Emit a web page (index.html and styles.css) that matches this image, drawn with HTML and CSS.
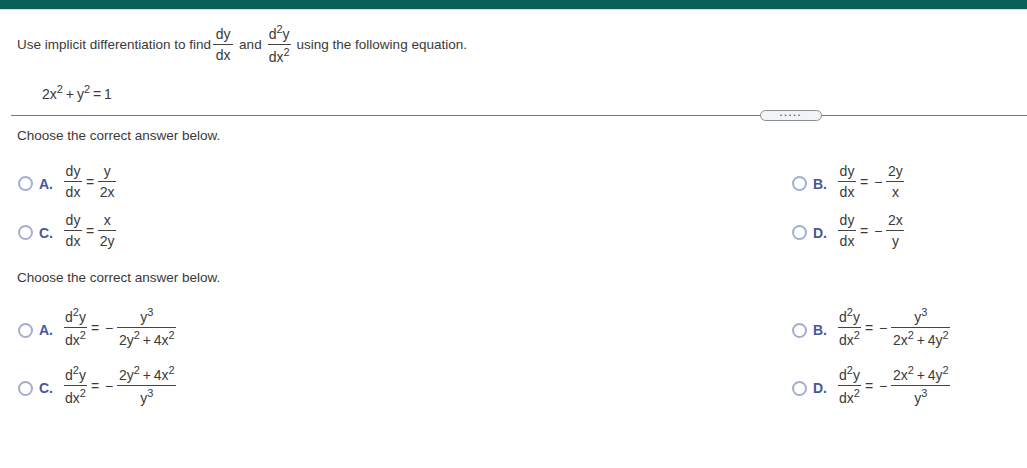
FILE: index.html
```html
<!DOCTYPE html>
<html lang="en">
<head>
<meta charset="utf-8">
<title>Implicit differentiation</title>
<link rel="stylesheet" href="styles.css">
</head>
<body>
<div class="topbar"></div>
<div class="question">
  <span class="lead">Use implicit differentiation to find</span>
  <span class="frac"><span class="num"><span>dy</span></span><span class="den"><span>dx</span></span></span>
  <span>and</span>
  <span class="frac"><span class="num"><span>d<sup>2</sup>y</span></span><span class="den"><span>dx<sup>2</sup></span></span></span>
  <span>using the following equation.</span>
</div>
<div class="equation">2x<sup>2</sup> + y<sup>2</sup> = 1</div>
<div class="divider"><span class="handle">.....</span></div>

<p class="prompt">Choose the correct answer below.</p>
<div class="options first">
  <div class="option">
    <span class="radio"></span><span class="letter">A.</span>
    <span class="frac"><span class="num"><span>dy</span></span><span class="den"><span>dx</span></span></span><span class="eq">=</span>
    <span class="frac"><span class="num"><span>y</span></span><span class="den"><span>2x</span></span></span>
  </div>
  <div class="option">
    <span class="radio"></span><span class="letter">B.</span>
    <span class="frac"><span class="num"><span>dy</span></span><span class="den"><span>dx</span></span></span><span class="eq">=</span><span class="minus">&minus;</span>
    <span class="frac"><span class="num"><span>2y</span></span><span class="den"><span>x</span></span></span>
  </div>
  <div class="option">
    <span class="radio"></span><span class="letter">C.</span>
    <span class="frac"><span class="num"><span>dy</span></span><span class="den"><span>dx</span></span></span><span class="eq">=</span>
    <span class="frac"><span class="num"><span>x</span></span><span class="den"><span>2y</span></span></span>
  </div>
  <div class="option">
    <span class="radio"></span><span class="letter">D.</span>
    <span class="frac"><span class="num"><span>dy</span></span><span class="den"><span>dx</span></span></span><span class="eq">=</span><span class="minus">&minus;</span>
    <span class="frac"><span class="num"><span>2x</span></span><span class="den"><span>y</span></span></span>
  </div>
</div>

<p class="prompt second">Choose the correct answer below.</p>
<div class="options last">
  <div class="option">
    <span class="radio"></span><span class="letter">A.</span>
    <span class="frac"><span class="num"><span>d<sup>2</sup>y</span></span><span class="den"><span>dx<sup>2</sup></span></span></span><span class="eq">=</span><span class="minus">&minus;</span>
    <span class="frac wide"><span class="num"><span>y<sup>3</sup></span></span><span class="den"><span>2y<sup>2</sup> + 4x<sup>2</sup></span></span></span>
  </div>
  <div class="option">
    <span class="radio"></span><span class="letter">B.</span>
    <span class="frac"><span class="num"><span>d<sup>2</sup>y</span></span><span class="den"><span>dx<sup>2</sup></span></span></span><span class="eq">=</span><span class="minus">&minus;</span>
    <span class="frac wide"><span class="num"><span>y<sup>3</sup></span></span><span class="den"><span>2x<sup>2</sup> + 4y<sup>2</sup></span></span></span>
  </div>
  <div class="option">
    <span class="radio"></span><span class="letter">C.</span>
    <span class="frac"><span class="num"><span>d<sup>2</sup>y</span></span><span class="den"><span>dx<sup>2</sup></span></span></span><span class="eq">=</span><span class="minus">&minus;</span>
    <span class="frac wide"><span class="num"><span>2y<sup>2</sup> + 4x<sup>2</sup></span></span><span class="den"><span>y<sup>3</sup></span></span></span>
  </div>
  <div class="option">
    <span class="radio"></span><span class="letter">D.</span>
    <span class="frac"><span class="num"><span>d<sup>2</sup>y</span></span><span class="den"><span>dx<sup>2</sup></span></span></span><span class="eq">=</span><span class="minus">&minus;</span>
    <span class="frac wide"><span class="num"><span>2x<sup>2</sup> + 4y<sup>2</sup></span></span><span class="den"><span>y<sup>3</sup></span></span></span>
  </div>
</div>
</body>
</html>
```
FILE: styles.css
```css
* { box-sizing: border-box; }
html, body { margin: 0; padding: 0; }
body {
  height: 468px;
  overflow: hidden;
  background: #fff;
  color: #3a3a3a;
  font: 13.5px/16px "Liberation Sans", Arial, sans-serif;
}
sup { font-size: 11px; line-height: 1; vertical-align: 6px; }
.topbar {
  height: 10px;
  background: #0a5f58;
  border-bottom: 1px solid #bfe6e4;
}
.question {
  display: flex;
  align-items: center;
  gap: 6px;
  margin: 11px 0 0 17px;
  height: 48px;
}
.lead { margin-right: -4px; }
.frac {
  display: inline-grid;
  grid-auto-rows: 1fr;
  min-width: 18px;
  font-size: 14px;
}
.question .frac { min-width: 20px; }
.num, .den {
  display: flex;
  justify-content: center;
  padding: 0 1px;
  white-space: nowrap;
  word-spacing: -1px;
}
.num { align-items: flex-end; border-bottom: 1px solid #444; padding-bottom: 2px; }
.den { align-items: flex-start; padding-top: 2px; }
.equation {
  height: 16px;
  margin: 15px 0 0 42px;
  font-size: 14px;
  word-spacing: -1px;
}
.divider {
  position: relative;
  margin: 15px 0 0 11px;
  height: 1px;
  background: #777;
}
.handle {
  position: absolute;
  left: 749px;
  top: -5px;
  width: 62px;
  height: 11px;
  border: 1px solid #8a8f94;
  border-radius: 6px;
  background: #f1f3f6;
  font-size: 9px;
  font-weight: bold;
  line-height: 4px;
  letter-spacing: 2px;
  text-align: center;
  color: #555;
}
.prompt { margin: 12px 0 0 17px; }
.prompt.second { margin-top: 20px; }
.options {
  display: grid;
  grid-template-columns: 774px 1fr;
  margin-left: 18px;
}
.options.first { margin-top: 18px; row-gap: 10px; }
.options.last { margin-top: 20px; row-gap: 14px; }
.option { display: flex; align-items: center; height: 39px; font-size: 14px; }
.options.last .option { height: 44px; }
.radio {
  width: 15px;
  height: 15px;
  margin-top: 4px;
  border: 2px solid #a3aed0;
  border-radius: 50%;
  background: #fff;
}
.letter {
  width: 25px;
  margin: 4px 0 0 6px;
  font-weight: bold;
  color: #47569c;
}
.eq { margin: 0 4px; }
.minus { margin: 0 4px 0 2px; }
.frac.wide { min-width: 59px; }
```
